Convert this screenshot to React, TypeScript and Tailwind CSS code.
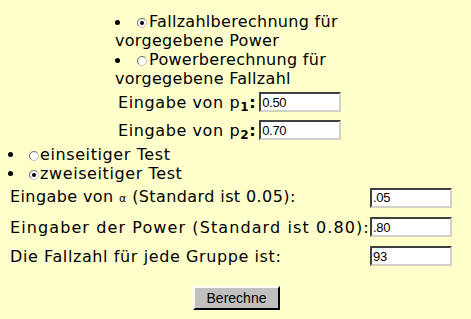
import React from "react";

function Radio({ checked }: { checked?: boolean }) {
  return (
    <svg width="10" height="10" viewBox="0 0 10 10" className="inline-block shrink-0">
      <circle cx="5" cy="5" r="4.5" fill="#ffffff" stroke="#c0c0c0" strokeWidth="1" />
      <path d="M1.8 8.2 A4.5 4.5 0 0 1 8.2 1.8" fill="none" stroke="#707070" strokeWidth="1" />
      {checked && <circle cx="5" cy="5" r="2" fill="#000000" />}
    </svg>
  );
}

function Bullet() {
  return <span className="inline-block w-[5px] h-[5px] rounded-full bg-black shrink-0" />;
}

function Field({ value }: { value: string }) {
  return (
    <div className="w-[82px] h-[20px] bg-white border-2 border-t-[#404040] border-l-[#404040] border-b-[#d4d0c8] border-r-[#d4d0c8] flex items-center pl-[1px] text-[13px] leading-none tracking-[-0.3px] font-['Liberation_Sans',sans-serif] text-black">
      {value}
    </div>
  );
}

export default function App() {
  return (
    <div className="w-[471px] h-[319px] bg-[#ffffcc] text-black font-['DejaVu_Sans',sans-serif] text-[16px] tracking-[0.3px] leading-[19px] overflow-hidden">
      <div className="pt-[12px] pl-[115px] w-[360px]">
        <div className="w-[230px]">
          <div>
            <span className="inline-flex items-center align-middle gap-[17px]">
              <Bullet />
              <Radio checked />
            </span>
            <span className="pl-[2px]">Fallzahlberechnung für vorgegebene Power</span>
          </div>
          <div>
            <span className="inline-flex items-center align-middle gap-[17px]">
              <Bullet />
              <Radio />
            </span>
            <span className="pl-[2px]">Powerberechnung für vorgegebene Fallzahl</span>
          </div>
        </div>
        <div className="mt-[4px] flex flex-col gap-[8px] pl-[3px] tracking-[0.6px]">
          <div className="flex items-center gap-[3px]">
            <span>
              Eingabe von p<sub className="font-bold text-[12px]">1</sub>
              <b>:</b>
            </span>
            <Field value="0.50" />
          </div>
          <div className="flex items-center gap-[3px]">
            <span>
              Eingabe von p<sub className="font-bold text-[12px]">2</sub>
              <b>:</b>
            </span>
            <Field value="0.70" />
          </div>
        </div>
      </div>
      <div className="pl-[8px] mt-[5px] tracking-[0.6px]">
        <div className="flex items-center">
          <Bullet />
          <span className="ml-[16px]"><Radio /></span>
          <span className="ml-[1px]">einseitiger Test</span>
        </div>
        <div className="flex items-center">
          <Bullet />
          <span className="ml-[16px]"><Radio checked /></span>
          <span className="ml-[1px]">zweiseitiger Test</span>
        </div>
      </div>
      <div className="pl-[10px] mt-[4px] flex flex-col gap-[9px]">
        <div className="flex items-center">
          <span className="w-[360px] tracking-[0.4px]">
            Eingabe von <span className="text-[11px]">α</span> (Standard ist 0.05):
          </span>
          <Field value=".05" />
        </div>
        <div className="flex items-center">
          <span className="w-[360px] tracking-[1.1px]">Eingaber der Power (Standard ist 0.80):</span>
          <Field value=".80" />
        </div>
        <div className="flex items-center">
          <span className="w-[360px] tracking-[0.6px]">Die Fallzahl für jede Gruppe ist:</span>
          <Field value="93" />
        </div>
      </div>
      <div className="flex justify-center mt-[20px] pl-[2px]">
        <button className="w-[87px] h-[24px] bg-[#c0c0c0] border-2 border-t-white border-l-white border-b-black border-r-black text-[14px] tracking-normal font-['Liberation_Sans',sans-serif] text-black leading-none">
          Berechne
        </button>
      </div>
    </div>
  );
}
